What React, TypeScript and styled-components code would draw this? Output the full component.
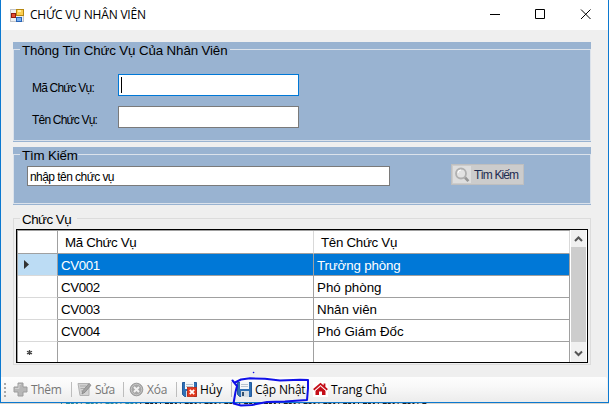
import React from "react";
import styled, { createGlobalStyle } from "styled-components";

const Global = createGlobalStyle`
  * { box-sizing: border-box; }
  body { margin: 0; background: #fff; overflow: hidden; font-family: "Liberation Sans", Arial, sans-serif; color: #000; }
`;
const Page = styled.div`
  position: relative; width: 609px; height: 407px; overflow: hidden;
`;
const Window = styled.div`
  width: 609px; height: 403px; display: flex; flex-direction: column;
  background: #efefef; border: solid #0c79d0; border-width: 0 1px 1px 1px;
`;
const TitleBar = styled.header`
  height: 30px; flex: none; background: #fff; display: flex; align-items: center; padding: 0 16px 0 9px;
`;
const Title = styled.h1`
  margin: 0 auto 0 5px; font: 400 12px/20px "Open Sans", "Noto Sans", sans-serif; letter-spacing: -0.2px; white-space: nowrap;
`;
const Controls = styled.svg`display: block; width: 102px; height: 12px;`;
const Body = styled.main`
  flex: 1; padding: 12px 17px 0 12px; display: flex; flex-direction: column;
`;
const Group = styled.section<{ $h: number; $mb: number; $blue?: boolean }>`
  height: ${(p) => p.$h}px; margin-bottom: ${(p) => p.$mb}px; flex: none; width: 578px;
  background: ${(p) => (p.$blue ? "#99b3d1" : "transparent")};
  padding-bottom: ${(p) => (p.$blue ? 1 : 0)}px; display: flex; flex-direction: column;
`;
const Frame = styled.div<{ $blue?: boolean }>`
  flex: 1; border: solid ${(p) => (p.$blue ? "#dbe2eb" : "#dcdcdc")}; border-width: 0 1px 1px 1px;
`;
const Legend = styled.div<{ $blue?: boolean; $h: number }>`
  display: flex; align-items: flex-end; height: ${(p) => p.$h}px; flex: none;
  &::before, &::after { content: ""; height: 1px; background: ${(p) => (p.$blue ? "#dbe2eb" : "#dcdcdc")}; }
  &::before { width: 7px; }
  &::after { flex: 1; }
`;
const LegendText = styled.span<{ $w: number; $ls: number }>`
  font-size: 13.33px; line-height: 16px; height: 1px; margin-bottom: -1px; width: ${(p) => p.$w}px;
  display: flex; align-items: center; padding-left: 2px; white-space: nowrap; letter-spacing: ${(p) => p.$ls}px;
`;
const Fields = styled.div`display: grid; row-gap: 10px; padding-top: 24px;`;
const Field = styled.label`
  display: flex; height: 22px; padding-left: 18px; font-size: 12px; line-height: 28px; letter-spacing: -0.8px;
  span { width: 86px; white-space: nowrap; }
`;
const Input = styled.div<{ $focus?: boolean; $w: number; $h: number }>`
  width: ${(p) => p.$w}px; height: ${(p) => p.$h}px; background: #fff; flex: none;
  border: 1px solid ${(p) => (p.$focus ? "#0078d7" : "#7a7a7a")};
  font-size: 12px; line-height: ${(p) => p.$h}px; padding-left: 2px; display: flex; letter-spacing: -0.55px;
`;
const Caret = styled.i`width: 1px; height: 16px; background: #000; margin-top: 2px;`;
const SearchRow = styled.div`display: flex; padding: 11px 0 0 13px;`;
const SearchButton = styled.button`
  margin: -2px 0 0 61px; width: 73px; height: 21px;
  border: 1px solid #bfbfbf; background: #cccccc; color: #1d2b50; padding: 0 0 0 1px; display: flex; align-items: center;
  font: 12px "Liberation Sans", sans-serif; letter-spacing: -0.9px; white-space: nowrap; gap: 3px;
`;
const Grid = styled.div`
  margin: 10px 0 0 2px; width: 572px; height: 134px; border: 1px solid #000; background: #fff; display: flex;
`;
const Table = styled.div`
  width: 553px; border-left: 1px solid #a0a0a0; border-top: 1px solid #a0a0a0; overflow: hidden; height: 132px;
`;
const Row = styled.div<{ $sel?: boolean; $head?: boolean }>`
  display: grid; grid-template-columns: 40px 256px 256px; height: ${(p) => (p.$head ? 23 : 22)}px;
  background: ${(p) => (p.$sel ? "#0078d7" : "#fff")}; color: ${(p) => (p.$sel ? "#fff" : "#000")};
`;
const RowHeader = styled.div<{ $sel?: boolean; $head?: boolean }>`
  background: ${(p) => (p.$sel ? "#bcdcf4" : "#fff")}; border-right: 1px solid #a0a0a0;
  border-bottom: 1px solid ${(p) => (p.$head ? "#a0a0a0" : "#d9d9d9")}; display: flex; align-items: center; padding-left: 6px;
`;
const Cell = styled.div<{ $head?: boolean; $ls?: number }>`
  border-right: 1px solid ${(p) => (p.$head ? "#d9d9d9" : "#a0a0a0")}; border-bottom: 1px solid #a0a0a0;
  padding-left: ${(p) => (p.$head ? 7 : 3)}px; font-size: 13.33px; line-height: 24px; height: 100%; overflow: hidden;
  letter-spacing: ${(p) => p.$ls ?? 0}px; white-space: nowrap;
`;
const ScrollBar = styled.div`
  width: 15px; margin-left: 1px; background: #f0f0f0; display: flex; flex-direction: column;
  svg { display: block; flex: none; }
`;
const Thumb = styled.div`height: 95px; background: #cdcdcd; flex: none;`;
const ToolStrip = styled.footer`
  height: 25px; width: 606px; flex: none; background: linear-gradient(#fdfdfd, #f8f8f8 40%, #ececec);
  display: flex; align-items: center; border-radius: 0 2px 2px 0;
`;
const GripArea = styled.div`width: 12px; padding-left: 3px; flex: none; svg { display: block; }`;
const Tool = styled.div<{ $w: number; $pad?: number; $off?: boolean; $ls: number }>`
  width: ${(p) => p.$w}px; height: 25px; display: flex; align-items: center; gap: 3px; flex: none;
  padding-left: ${(p) => p.$pad ?? 5}px;
  font: 12px/24px "Open Sans", "Noto Sans", sans-serif; letter-spacing: ${(p) => p.$ls}px; white-space: nowrap;
  color: ${(p) => (p.$off ? "#767676" : "#000")};
  svg { flex: none; display: block; }
`;
const Sep = styled.i`width: 1px; height: 15px; background: #bdbdbd; flex: none;`;
const Ink = styled.svg`position: absolute; left: 225px; top: 368px; pointer-events: none;`;
const Behind = styled.svg`display: block;`;

const FormIcon = () => (
  <svg width="15" height="15" viewBox="0 0 15 15" shapeRendering="crispEdges">
    <path d="M.5 1.5h13v12H.5z" fill="#eef0f2" stroke="#c2c5c9" />
    <rect x="6" y="1" width="8" height="7" fill="#b78810" /><rect x="7" y="2" width="6" height="5" fill="#fbce52" /><rect x="8" y="2" width="3" height="2" fill="#fff0a3" />
    <rect x="1" y="5" width="5" height="5" fill="#8f1a10" /><rect x="2" y="6" width="3" height="3" fill="#e34a31" />
    <rect x="6" y="9" width="6" height="5" fill="#2865b8" /><rect x="7" y="10" width="4" height="3" fill="#79aff0" />
  </svg>
);
const Magnifier = () => (
  <svg width="18" height="17" viewBox="0 0 18 17">
    <rect width="18" height="17" fill="#dedede" />
    <path d="M12 11.5l3.4 3.7" stroke="#969696" strokeWidth="2.6" />
    <circle cx="8" cy="7.5" r="5" fill="#e2e2e2" stroke="#b0b0b0" strokeWidth="1.8" />
    <path d="M5 7a3 3 0 0 1 3-3" stroke="#fff" fill="none" />
  </svg>
);
const Plus = () => (
  <svg width="15" height="15" viewBox="0 0 15 15"><path d="M5 1h5v4h4v5h-4v4H5v-4H1V5h4z" fill="#b7b7b7" stroke="#9c9c9c" /><path d="M6 2.5h2M2 6.5h4v-4" stroke="#d0d0d0" fill="none" /></svg>
);
const Edit = () => (
  <svg width="15" height="15" viewBox="0 0 15 15"><path d="M1 1.5h11v12H3z" fill="#d2d2d2" stroke="#b2b2b2" /><path d="M3 4h6M3.5 6.5h4M4 9h2" stroke="#aaa" /><path d="M5 12l1-3.5 6-7 2 1.7-6 7z" fill="#a3a3a3" stroke="#858585" strokeWidth=".8" /></svg>
);
const Cancel = () => (
  <svg width="15" height="15" viewBox="0 0 15 15"><circle cx="7.5" cy="7.5" r="6.3" fill="#a6a6a6" stroke="#9a9a9a" /><circle cx="7.5" cy="7.5" r="5.2" fill="none" stroke="#c4c4c4" /><path d="M5 5l5 5m0-5l-5 5" stroke="#f1f1f1" strokeWidth="2" /></svg>
);
const Floppy = ({ x }: { x?: boolean }) => (
  <svg width="15" height="15" viewBox="0 0 15 15">
    <path d="M.5.5h14v14h-12l-2-2z" fill="#2f6fb5" stroke="#245a9b" />
    <rect x="3" y="0" width="9" height="7" fill="#f5f7f9" /><path d="M4 2.5h7m-7 2h7" stroke="#b9c4cf" />
    <rect x="4" y="9" width="8" height="6" fill="#d6dde4" /><rect x="5" y="10" width="2" height="4" fill="#34506f" />
    {x && <><rect x="5.5" y="5.500" width="9" height="9" fill="#e2391f" stroke="#bb2712" strokeWidth=".8" /><path d="M7.800 7.800l4.400 4.400m0-4.400l-4.400 4.400" stroke="#fff" strokeWidth="1.8" /></>}
  </svg>
);
const House = () => (
  <svg width="15" height="15" viewBox="0 0 15 15"><rect width="15" height="15" fill="#fff" /><path d="M2.5 8.5l5-4.5 5 4.5V13H9V9.500H6V13H2.500z" fill="#c40d17" /><path d="M.7 7.800L7.500 1.900l6.800 5.900M11.500 1.500V5" stroke="#c40d17" strokeWidth="1.8" fill="none" /><path d="M2 8.800l5.500-4.700L13 8.800" stroke="#fff" strokeWidth=".7" fill="none" /></svg>
);
const Grip = () => (
  <svg width="2" height="15"><path d="M1 1v14" stroke="#a8a8a8" strokeWidth="2" strokeDasharray="2 2" /></svg>
);

const rows: [string, string, number][] = [
  ["CV001", "Trưởng phòng", -0.15],
  ["CV002", "Phó phòng", 0],
  ["CV003", "Nhân viên", 0],
  ["CV004", "Phó Giám Đốc", 0],
];
/* start and length of each letter top showing under the window edge */
const marks = Array.from({ length: 74 }, (_, i) => [61 + i * 4.95, 1 + ((i * 7) % 4)]);

export default function App() {
  return (
    <Page>
      <Global />
      <Window>
        <TitleBar>
          <FormIcon />
          <Title>CHỨC VỤ NHÂN VIÊN</Title>
          <Controls viewBox="0 0 102 12">
            <path d="M0 5.5h10M45.5 .5h9v9h-9zM91 .5l9.500 9.500m0-9.500L91 10" fill="none" stroke="#000" />
          </Controls>
        </TitleBar>
        <Body>
          <Group $h={100} $mb={5} $blue>
            <Legend $blue $h={8}><LegendText $w={210} $ls={-0.13}>Thông Tin Chức Vụ Của Nhân Viên</LegendText></Legend>
            <Frame $blue>
              <Fields>
                <Field><span>Mã Chức Vụ:</span><Input $focus $w={181} $h={22}><Caret /></Input></Field>
                <Field><span>Tên Chức Vụ:</span><Input $w={181} $h={22} /></Field>
              </Fields>
            </Frame>
          </Group>
          <Group $h={58} $mb={10} $blue>
            <Legend $blue $h={8}><LegendText $w={58} $ls={-0.15}>Tìm Kiếm</LegendText></Legend>
            <Frame $blue>
              <SearchRow>
                <Input $w={363} $h={20}>nhập tên chức vụ</Input>
                <SearchButton><Magnifier />Tìm Kiếm</SearchButton>
              </SearchRow>
            </Frame>
          </Group>
          <Group $h={150} $mb={0}>
            <Legend $h={4}><LegendText $w={57} $ls={-0.5}>Chức Vụ</LegendText></Legend>
            <Frame>
              <Grid>
                <Table>
                  <Row $head><RowHeader $head /><Cell $head $ls={-0.35}>Mã Chức Vụ</Cell><Cell $head $ls={-0.3}>Tên Chức Vụ</Cell></Row>
                  {rows.map(([id, name, ls], i) => (
                    <Row key={id} $sel={i === 0}>
                      <RowHeader $sel={i === 0}>{i === 0 && <svg width="5" height="9"><path d="M0 0v9l5-4.5z" fill="#333" /></svg>}</RowHeader>
                      <Cell $ls={-0.4}>{id}</Cell><Cell $ls={ls}>{name}</Cell>
                    </Row>
                  ))}
                  <Row>
                    <RowHeader><svg width="11" height="7"><path d="M5.5 1v5M3 2.200l5 2.700M8 2.200L3 4.900" stroke="#444" strokeWidth="1.3" /></svg></RowHeader>
                    <Cell /><Cell />
                  </Row>
                </Table>
                <ScrollBar>
                  <svg width="15" height="17"><path d="M4 11l3.5-3.5L11 11" stroke="#555" strokeWidth="2" fill="none" /></svg>
                  <Thumb />
                  <svg width="15" height="20"><path d="M4 9.500l3.5 3.500L11 9.500" stroke="#555" strokeWidth="2" fill="none" /></svg>
                </ScrollBar>
              </Grid>
            </Frame>
          </Group>
        </Body>
        <ToolStrip>
          <GripArea><Grip /></GripArea>
          <Tool $w={58} $pad={0} $off $ls={-0.3}><Plus />Thêm</Tool><Sep />
          <Tool $w={51} $off $ls={-0.5}><Edit />Sửa</Tool><Sep />
          <Tool $w={52} $off $ls={-0.2}><Cancel />Xóa</Tool><Sep />
          <Tool $w={54} $ls={0}><Floppy x />Hủy</Tool><Sep />
          <Tool $w={76} $ls={-0.2}><Floppy />Cập Nhật</Tool>
          <Tool $w={90} $ls={-0.2}><House />Trang Chủ</Tool>
        </ToolStrip>
      </Window>
      <Behind width="609" height="4">
        <rect width="609" height="1" fill="#d8d4cc" />
        {marks.map(([x, w], i) => <rect key={i} x={x} width={w} height="1" fill={i < 16 ? "#2b8a9a" : "#222"} />)}
      </Behind>
      <Ink width="90" height="39" fill="none" stroke="#1010e8" strokeWidth="2" strokeLinecap="round" strokeLinejoin="round">
        <path d="M7.500 12.500L12 18l-1.500 6L8.500 35.500 16 37.500 27 37l15-3 18-.5 22-1.500L83 20.500V12l-8-.3-20 .8-15-1.700-15-.5-9 1.200-6 3" />
        <path d="M28.500 4.500h.1" strokeWidth="1.5" />
      </Ink>
    </Page>
  );
}
